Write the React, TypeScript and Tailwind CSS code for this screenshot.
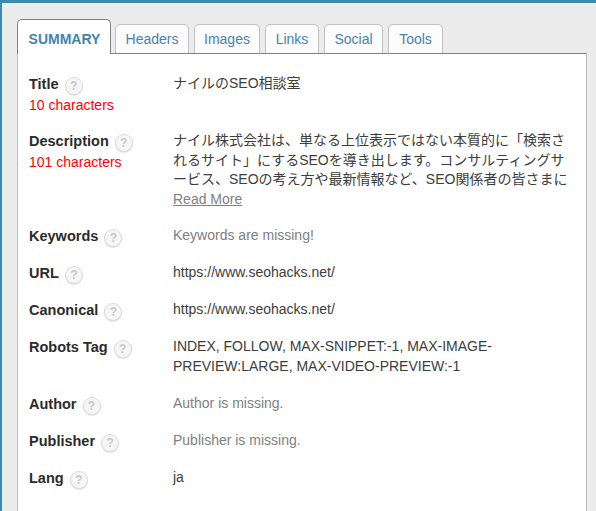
const tabs = [
  { name: "Headers", width: "w-[74px]" },
  { name: "Images", width: "w-[66px]" },
  { name: "Links", width: "w-[54px]" },
  { name: "Social", width: "w-[59px]" },
  { name: "Tools", width: "w-[55px]" },
];

function Help() {
  return (
    <span className="ml-[6px] mt-[3px] flex h-[18px] w-[18px] shrink-0 items-center justify-center rounded-full border border-[#dcdcdc] bg-[#f6f6f6] text-[12px] font-bold leading-none text-[#c8c8c8] shadow-[0_1px_1px_rgba(0,0,0,0.12)]">
      ?
    </span>
  );
}

function Row({ label, note, children }: { label: string; note?: string; children: React.ReactNode }) {
  return (
    <div className="flex pb-[17px]">
      <div className="w-[144px] shrink-0">
        <div className="flex h-[20px] items-start">
          <span className="text-[14.5px] font-bold leading-[20px] text-[#2b2b2b]">{label}</span>
          <Help />
        </div>
        {note && <div className="mb-[-2px] text-[14px] leading-[22px] text-[#ff0000]">{note}</div>}
      </div>
      <div className="min-w-0 flex-1 text-[14px] leading-[19.6px] text-[#3d3d3d]">{children}</div>
    </div>
  );
}

function Missing({ children }: { children: React.ReactNode }) {
  return <span className="text-[#808080]">{children}</span>;
}

export default function App() {
  return (
    <div className="h-[511px] w-[596px] overflow-hidden border-l-2 border-t-[3px] border-[#3b8ab0] bg-[#ececec] pl-[15px] pr-[9px] pt-[16px] font-['Liberation_Sans','Noto_Sans_CJK_JP',sans-serif]">
      <div className="relative z-10 flex h-[34px] items-end gap-[3px]">
        <div className="mb-[-1px] flex h-[35px] w-[94px] items-center justify-center rounded-t-[5px] border border-b-0 border-[#808080] bg-white pl-px pt-[4px] text-[14px] font-bold text-[#4484ac]">
          SUMMARY
        </div>
        <div className="flex gap-[5px] pl-[1px]">
          {tabs.map((tab) => (
            <div
              key={tab.name}
              className={`flex h-[29px] items-center justify-center rounded-t-[5px] border border-b-0 border-[#c2c2c2] bg-[#fcfcfc] pt-px text-[14px] text-[#4484ac] ${tab.width}`}
            >
              {tab.name}
            </div>
          ))}
        </div>
      </div>
      <div className="h-[460px] border border-b-0 border-[#bdbdbd] border-t-[#808080] bg-white pl-[11px] pr-[18px] pt-[20px]">
        <Row label="Title" note="10 characters">
          ナイルのSEO相談室
        </Row>
        <Row label="Description" note="101 characters">
          ナイル株式会社は、単なる上位表示ではない本質的に「検索されるサイト」にするSEOを導き出します。コンサルティングサービス、SEOの考え方や最新情報など、SEO関係者の皆さまに
          <div>
            <span className="text-[#808080] underline">Read More</span>
          </div>
        </Row>
        <Row label="Keywords">
          <Missing>Keywords are missing!</Missing>
        </Row>
        <Row label="URL">https://www.seohacks.net/</Row>
        <Row label="Canonical">https://www.seohacks.net/</Row>
        <Row label="Robots Tag">INDEX, FOLLOW, MAX-SNIPPET:-1, MAX-IMAGE-PREVIEW:LARGE, MAX-VIDEO-PREVIEW:-1</Row>
        <Row label="Author">
          <Missing>Author is missing.</Missing>
        </Row>
        <Row label="Publisher">
          <Missing>Publisher is missing.</Missing>
        </Row>
        <Row label="Lang">ja</Row>
      </div>
    </div>
  );
}
